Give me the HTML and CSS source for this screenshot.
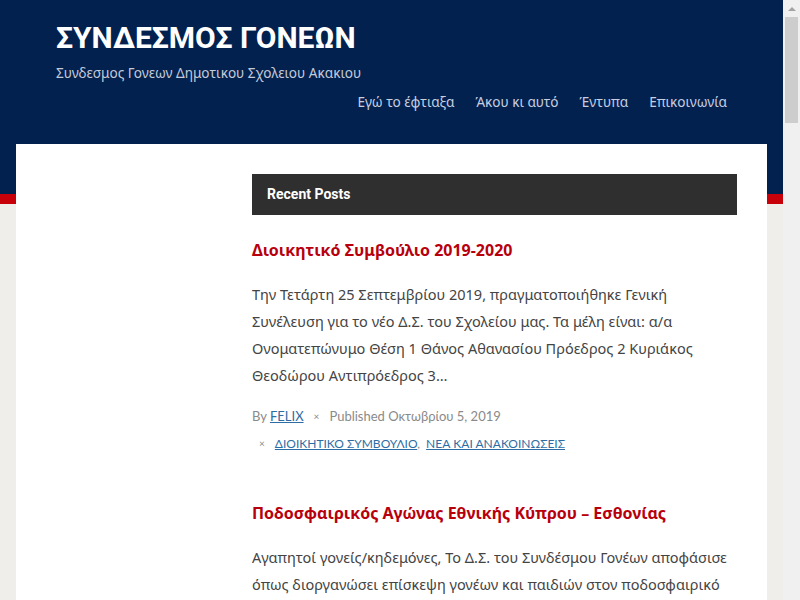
FILE: index.html
```html
<!DOCTYPE html>
<html lang="el">
<head>
    <meta charset="UTF-8">
    <meta name="viewport" content="width=device-width, initial-scale=1.0">
    <title>ΣΥΝΔΕΣΜΟΣ ΓΟΝΕΩΝ</title>
    <link rel="stylesheet" href="styles.css">
</head>
<body>
    <header class="site-header">
        <div class="header-inner">
            <h1 class="site-title">ΣΥΝΔΕΣΜΟΣ ΓΟΝΕΩΝ</h1>
            <p class="site-desc">Συνδεσμος Γονεων Δημοτικου Σχολειου Ακακιου</p>
            <nav class="main-nav">
                <a href="#">Εγώ το έφτιαξα</a>
                <a href="#">Άκου κι αυτό</a>
                <a href="#">Έντυπα</a>
                <a href="#">Επικοινωνία</a>
            </nav>
        </div>
    </header>
    <div class="red-band"></div>

    <div class="page">
        <div class="container">
            <aside class="sidebar"></aside>
            <main class="content">
                <div class="section-bar">Recent Posts</div>

                <article class="post">
                    <h2 class="post-title"><a href="#">Διοικητικό Συμβούλιο 2019-2020</a></h2>
                    <p class="post-excerpt">Την Τετάρτη 25 Σεπτεμβρίου 2019, πραγματοποιήθηκε Γενική Συνέλευση για το νέο Δ.Σ. του Σχολείου μας. Τα μέλη είναι: α/α Ονοματεπώνυμο Θέση 1 Θάνος Αθανασίου Πρόεδρος 2 Κυριάκος Θεοδώρου Αντιπρόεδρος 3…</p>
                    <div class="post-meta">
                        <span>By <a href="#">FELIX</a></span>
                        <span class="sep">×</span>
                        <span>Published Οκτωβρίου 5, 2019</span>
                    </div>
                    <div class="post-meta cats">
                        <span class="sep">×</span>
                        <span><a href="#">ΔΙΟΙΚΗΤΙΚΟ ΣΥΜΒΟΥΛΙΟ</a>,&nbsp; <a href="#">ΝΕΑ ΚΑΙ ΑΝΑΚΟΙΝΩΣΕΙΣ</a></span>
                    </div>
                </article>

                <article class="post">
                    <h2 class="post-title"><a href="#">Ποδοσφαιρικός Αγώνας Εθνικής Κύπρου – Εσθονίας</a></h2>
                    <p class="post-excerpt">Αγαπητοί γονείς/κηδεμόνες, Το Δ.Σ. του Συνδέσμου Γονέων αποφάσισε όπως διοργανώσει επίσκεψη γονέων και παιδιών στον ποδοσφαιρικό αγώνα της Εθνικής Κύπρου με την Εσθονία στο ΓΣΠ…</p>
                </article>
            </main>
        </div>
    </div>

    <!-- window scrollbar, drawn -->
    <div class="scrollbar">
        <div class="scroll-up"></div>
        <div class="scroll-thumb"></div>
    </div>
</body>
</html>
```

FILE: styles.css
```css
body {
    margin: 0;
    padding: 0 17px 0 0;
    background: #f0eeeb;
    font-family: "Noto Sans", "Open Sans", sans-serif;
    color: #444;
    overflow: hidden;
}
a {
    text-decoration: none;
    color: inherit;
}

/* header */
.site-header {
    background: #03214f;
    height: 194px;
}
.header-inner {
    max-width: 751px;
    margin: 0 auto;
    padding: 20px 30px 0 40px;
    box-sizing: border-box;
}
.site-title {
    font-family: Roboto, sans-serif;
    font-weight: 700;
    font-size: 30px;
    line-height: 36px;
    color: #fff;
    margin: 0;
}
.site-desc {
    font-family: "Noto Sans", sans-serif;
    font-size: 13.6px;
    color: #c3cad8;
    margin: 7px 0 0;
}
.main-nav {
    display: flex;
    justify-content: flex-end;
    gap: 21px;
    margin-top: 10px;
    padding-right: 10px;
}
.main-nav a {
    font-size: 13.6px;
    color: #c6cee0;
}
.red-band {
    height: 10px;
    background: #c8000a;
}

/* page body */
.page {
    margin-top: -60px;
    height: 600px;
}
.container {
    max-width: 751px;
    margin: 0 auto;
    background: #fff;
    display: flex;
    padding: 30px 30px 0 0;
    box-sizing: border-box;
    height: 100%;
}
.sidebar {
    width: 236px;
    flex-shrink: 0;
}
.content {
    flex: 1;
}
.section-bar {
    background: #2f2f2f;
    color: #fff;
    font-family: Roboto, sans-serif;
    font-weight: 700;
    font-size: 14px;
    height: 41px;
    line-height: 41px;
    padding-left: 15px;
}
.post {
    padding-bottom: 21px;
}
.post-title {
    font-family: "Noto Sans", sans-serif;
    font-size: 16px;
    font-weight: 700;
    color: #b8000c;
    margin: 24px 0 20px;
}
.post-excerpt {
    font-size: 14.5px;
    line-height: 27px;
    margin: 0 0 14px;
}
.post-meta {
    font-family: Lato, "Noto Sans", sans-serif;
    font-size: 13px;
    color: #8a8a8a;
    line-height: 27px;
    display: flex;
    gap: 8px;
}
.post-meta a {
    color: #2e6da4;
    text-decoration: underline;
}
.post-meta .sep {
    font-size: 10px;
    padding: 0 2px;
}
.cats {
    padding-left: 5px;
    font-size: 12px;
}

/* scrollbar */
.scrollbar {
    position: fixed;
    top: 0;
    right: 0;
    width: 17px;
    height: 100%;
    background: #f0f0f0;
}
.scroll-up {
    width: 0;
    height: 0;
    margin: 7px auto 0;
    border-left: 4px solid transparent;
    border-right: 4px solid transparent;
    border-bottom: 4px solid #a3a3a3;
}
.scroll-thumb {
    margin: 6px 2px 0;
    height: 106px;
    background: #cdcdcd;
}
```
